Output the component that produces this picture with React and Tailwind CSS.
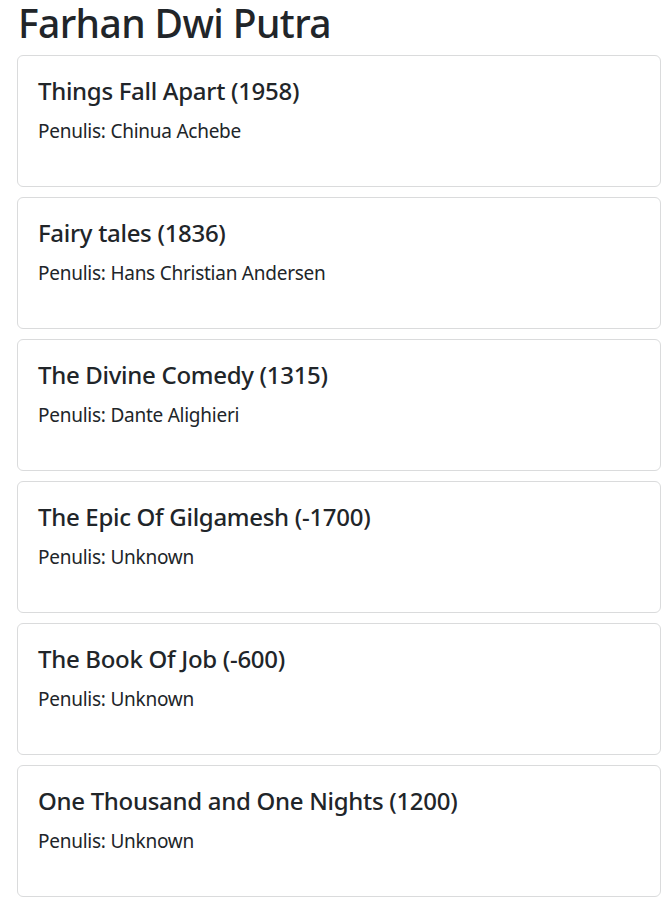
import React from 'react';

const books = [
    { title: 'Things Fall Apart', year: 1958, author: 'Chinua Achebe' },
    { title: 'Fairy tales', year: 1836, author: 'Hans Christian Andersen' },
    { title: 'The Divine Comedy', year: 1315, author: 'Dante Alighieri' },
    { title: 'The Epic Of Gilgamesh', year: -1700, author: 'Unknown' },
    { title: 'The Book Of Job', year: -600, author: 'Unknown' },
    { title: 'One Thousand and One Nights', year: 1200, author: 'Unknown' },
];

const BookCard = ({ book }) => (
    <div className="h-[132px] mb-[10px] rounded-[6px] border border-[#dadbdc] bg-white px-[20px] pt-[20px]">
        <h4 className="text-[24px] leading-[30px] font-medium tracking-[-0.3px] mb-[10px]">
            {book.title} ({book.year})
        </h4>
        <p className="text-[19px] leading-[30px] tracking-[-0.25px]">Penulis: {book.author}</p>
    </div>
);

const App = () => {
    return (
        <div className="min-h-screen bg-white text-[#212529] pl-[17px] pr-[10px] font-['Noto_Sans',sans-serif]">
            <h1 className="text-[39px] leading-[46px] font-medium tracking-[-0.6px] mb-[9px] pl-[1px]">Farhan Dwi Putra</h1>
            {books.map((book, i) => (
                <BookCard key={i} book={book} />
            ))}
        </div>
    );
};

export default App;
